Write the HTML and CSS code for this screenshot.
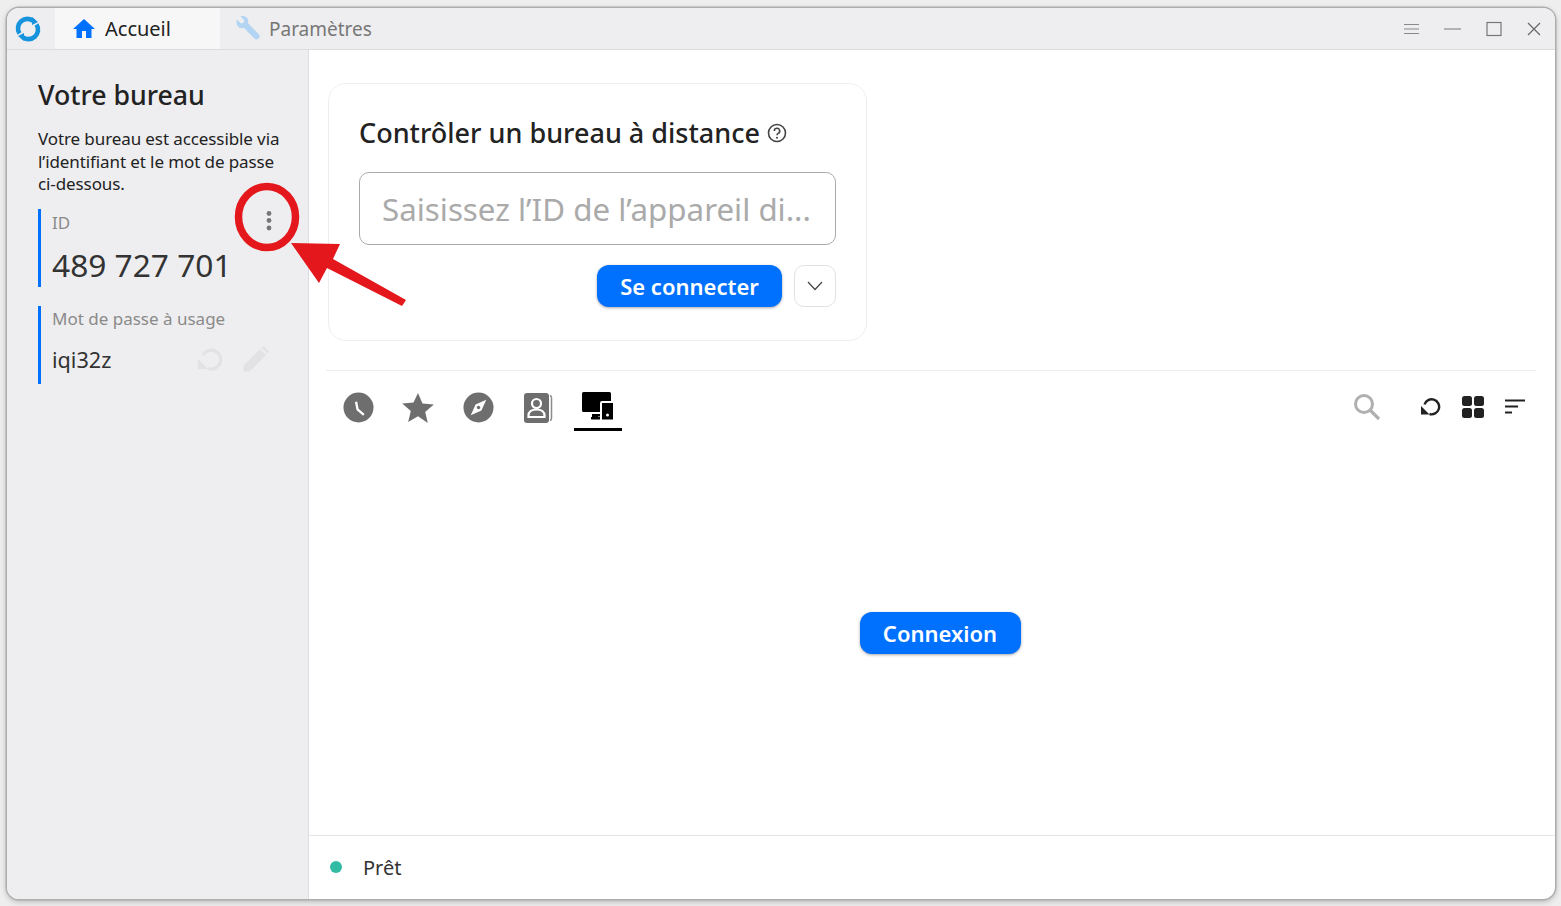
FILE: index.html
```html
<!DOCTYPE html>
<html lang="fr">
<head>
    <meta charset="UTF-8">
    <title>RustDesk - Accueil</title>
    <link rel="stylesheet" href="styles.css">
</head>
<body>
    <div class="window">
        <!-- Barre de titre -->
        <div class="titlebar">
            <svg class="logo" width="26" height="26" viewBox="0 0 26 26">
                <path d="M4.500 17.500A9.500 9.500 0 0 1 18.500 5" fill="none" stroke="#1693dd" stroke-width="4.600"/>
                <path d="M21.500 8.500A9.500 9.500 0 0 1 7.500 21" fill="none" stroke="#1693dd" stroke-width="4.600"/>
                <path d="M17 1l6 5-6 3zM9 25l-6-5 6-3z" fill="#1693dd"/>
            </svg>
            <div class="tab tab-active">
                <svg width="24" height="24" viewBox="0 0 24 24"><path d="M10 21v-7h4v7h5.500v-9H23L12 2 1 12h3.500v9z" fill="#0071ff"/></svg>
                <span>Accueil</span>
            </div>
            <div class="tab">
                <svg width="28" height="28" viewBox="0 0 28 28"><path d="M3 4.500l4 4 2.500-.8.800-2.500-4-4c3.500-1 7 .5 7.800 3.500.3 1.200.2 2.300-.2 3.300L25 19.500c1 1 1 2.500 0 3.500l-.8.800c-1 1-2.500 1-3.500 0L9.800 12.800c-1.200.4-2.500.5-3.800.1C3 12 1.800 8 3 4.500z" fill="#b3d4f2"/></svg>
                <span>Paramètres</span>
            </div>
            <div class="win-buttons">
                <svg width="15" height="12" viewBox="0 0 15 12"><path d="M0 1.500h15M0 6h15M0 10.500h15" stroke="#8a8a8a" stroke-width="1"/></svg>
                <svg width="17" height="12" viewBox="0 0 17 12"><path d="M0 6h17" stroke="#777" stroke-width="1.200"/></svg>
                <svg width="16" height="16" viewBox="0 0 16 16"><rect x="1" y="1.500" width="14" height="13" fill="none" stroke="#777" stroke-width="1.200"/></svg>
                <svg width="14" height="14" viewBox="0 0 14 14"><path d="M1 1l12 12M13 1L1 13" stroke="#666" stroke-width="1.200"/></svg>
            </div>
        </div>

        <div class="content">
            <!-- Panneau gauche -->
            <aside class="sidebar">
                <h2>Votre bureau</h2>
                <p class="intro">Votre bureau est accessible via l’identifiant et le mot de passe ci-dessous.</p>
                <div class="field field-id">
                    <div class="field-head">
                        <span class="label">ID</span>
                        <svg class="dots" width="6" height="22" viewBox="0 0 6 22"><circle cx="3" cy="3.500" r="2.400"/><circle cx="3" cy="10.500" r="2.400"/><circle cx="3" cy="18" r="2.400"/></svg>
                    </div>
                    <div class="id-value">489 727 701</div>
                </div>
                <div class="field field-pass">
                    <span class="label">Mot de passe à usage</span>
                    <div class="pass-row">
                        <span class="pass-value">iqi32z</span>
                        <svg width="26" height="26" viewBox="0 0 26 26"><path d="M5 9A9.500 9.500 0 1 1 10 22.500" fill="none" stroke="#e2e2e4" stroke-width="3.200"/><path d="M0 13l10 10H0z" fill="#e2e2e4"/></svg>
                        <svg class="pencil" width="28" height="28" viewBox="0 0 28 28"><path d="M1.500 26.500v-6L18 4l6 6L7.500 26.500zM19.500 2.500l2-1.500 5.500 5.500-1.500 2z" fill="#e2e2e4"/></svg>
                    </div>
                </div>
            </aside>

            <main class="main">
                <div class="connect-card">
                    <h3>Contrôler un bureau à distance
                        <svg width="20" height="20" viewBox="0 0 20 20"><circle cx="10" cy="10" r="8.500" fill="none" stroke="#444" stroke-width="1.600"/><path d="M7.300 8a2.700 2.700 0 1 1 3.900 2.400c-.8.400-1.200.9-1.200 1.800" fill="none" stroke="#444" stroke-width="1.600"/><circle cx="10" cy="14.700" r="1" fill="#444"/></svg>
                    </h3>
                    <div class="id-input">Saisissez l’ID de l’appareil di...</div>
                    <div class="connect-actions">
                        <button class="btn">Se connecter</button>
                        <button class="btn-more"><svg width="16" height="10" viewBox="0 0 16 10"><path d="M1 1l7 7.500L15 1" fill="none" stroke="#444" stroke-width="1.200"/></svg></button>
                    </div>
                </div>

                <div class="peers">
                    <div class="peer-tabs">
                        <!-- horloge -->
                        <span class="peer-tab"><svg width="31" height="31" viewBox="0 0 32 32"><circle cx="16" cy="16" r="15.500" fill="#6e6e6e"/><path d="M13.500 10l1.500 8 6.500 5.500" fill="none" stroke="#fff" stroke-width="2.400"/></svg></span>
                        <!-- favoris -->
                        <span class="peer-tab"><svg width="32" height="32" viewBox="0 0 32 32"><path d="M16 1l4.500 10.500 11.300 1-8.600 7.400 2.600 11.100L16 24.200 6.200 30l2.600-11.100L.2 11.500l11.300-1z" fill="#6e6e6e"/></svg></span>
                        <!-- boussole -->
                        <span class="peer-tab"><svg width="31" height="31" viewBox="0 0 32 32"><circle cx="16" cy="16" r="15.500" fill="#6e6e6e"/><path d="M24 8l-5 11-11 5 5-11z" fill="#fff"/><circle cx="16" cy="16" r="1.800" fill="#6e6e6e"/></svg></span>
                        <!-- carnet -->
                        <span class="peer-tab"><svg width="30" height="32" viewBox="0 0 30 32"><rect x="1" y="1" width="25" height="30" rx="3" fill="#6e6e6e"/><path d="M27 3.500c1 .3 1.500 1 1.500 2v21c0 1-.5 1.700-1.500 2" fill="none" stroke="#8c8c8c" stroke-width="1.500"/><circle cx="13.500" cy="11.500" r="4.500" fill="none" stroke="#fff" stroke-width="2.200"/><path d="M5.500 25v-1.500c0-3.500 3-6 8-6s8 2.500 8 6V25z" fill="none" stroke="#fff" stroke-width="2.200"/></svg></span>
                        <!-- appareils -->
                        <span class="peer-tab peer-tab-active"><svg width="32" height="28" viewBox="0 0 32 28"><path d="M1.500 0h26a1.500 1.500 0 0 1 1.500 1.500V9h-9a2 2 0 0 0-2 2v9H1.500A1.500 1.500 0 0 1 0 18.500v-17A1.500 1.500 0 0 1 1.500 0zM10 22h8v2.500h-2v.5h2v2.500H9V25h1z" fill="#000"/><path d="M20 11h11v16.500H20zM25.500 21.500a1.500 1.500 0 1 0 0 3 1.500 1.500 0 0 0 0-3z" fill="#000" fill-rule="evenodd"/></svg></span>
                    </div>
                    <div class="peer-tools">
                        <svg class="search" width="28" height="28" viewBox="0 0 28 28"><circle cx="11" cy="11" r="8.500" fill="none" stroke="#b0b0b0" stroke-width="3"/><path d="M17 17l9 9" stroke="#b0b0b0" stroke-width="3.200"/></svg>
                        <svg class="refresh" width="20" height="20" viewBox="0 0 20 20"><path d="M3.500 7.500A7.500 7.500 0 1 1 8.500 17" fill="none" stroke="#222" stroke-width="2.400"/><path d="M0 9l8.500 8.500H0z" fill="#222"/></svg>
                        <svg class="grid" width="22" height="22" viewBox="0 0 22 22"><rect width="10" height="10" rx="2.500" fill="#222"/><rect x="12" width="10" height="10" rx="2.500" fill="#222"/><rect y="12" width="10" height="10" rx="2.500" fill="#222"/><rect x="12" y="12" width="10" height="10" rx="2.500" fill="#222"/></svg>
                        <svg width="20" height="16" viewBox="0 0 20 16"><path d="M0 1.500h20M0 7.500h13M0 13.500h7" stroke="#222" stroke-width="2"/></svg>
                    </div>
                </div>

                <div class="empty">
                    <button class="btn btn-small">Connexion</button>
                </div>

                <div class="status">
                    <span class="status-dot"></span>
                    <span>Prêt</span>
                </div>
            </main>
        </div>
    </div>

    <!-- Annotation rouge -->
    <svg class="annotation" width="190" height="145" viewBox="0 0 190 145">
        <ellipse cx="50" cy="52" rx="28.500" ry="30.500" fill="none" stroke="#e4181c" stroke-width="7.500"/>
        <path d="M74 78l49 1-7 15 73 41-4 6-75-38-8 15z" fill="#e4181c"/>
    </svg>
</body>
</html>
```

FILE: styles.css
```css
* {
    box-sizing: border-box;
}
body {
    margin: 0;
    height: 906px;
    padding: 8px 6px 7px 7px;
    background-color: #eeeeee;
    font-family: "Noto Sans", "Open Sans", sans-serif;
    color: #222;
    overflow: hidden;
    position: relative;
}
.window {
    display: flex;
    flex-direction: column;
    height: 100%;
    background-color: #fff;
    border-radius: 12px;
    overflow: hidden;
    box-shadow: 0 0 0 1.500px #aeaeae, 0 2px 6px rgba(0, 0, 0, 0.3);
}
.titlebar {
    display: flex;
    align-items: center;
    height: 42px;
    flex-shrink: 0;
    background-color: #eeeef0;
    border-bottom: 1px solid #dcdcde;
}
.logo {
    margin-left: 8px;
    margin-right: 14px;
}
.tab {
    display: flex;
    align-items: center;
    gap: 7px;
    height: 41px;
    padding: 0 14px;
    font-size: 19px;
    color: #777;
}
.tab-active {
    width: 165px;
    padding-left: 17px;
    gap: 9px;
    background-color: #f7f7f8;
    font-size: 20px;
    color: #222;
}
.win-buttons {
    display: flex;
    align-items: center;
    gap: 25px;
    margin-left: auto;
    padding-right: 14px;
}
.content {
    display: flex;
    flex: 1;
    min-height: 0;
}
.sidebar {
    width: 302px;
    flex-shrink: 0;
    padding: 24px 20px 0 31px;
    background-color: #eeeef0;
    border-right: 1px solid #dcdcde;
}
.sidebar h2 {
    margin: 0;
    font-size: 26.700px;
    font-weight: 500;
    line-height: 42px;
}
.intro {
    margin: 12px 0 0;
    font-size: 17px;
    line-height: 22.500px;
    letter-spacing: -0.1px;
}
.field {
    border-left: 3px solid #0071ff;
    padding-left: 11px;
}
.field-id {
    margin-top: 13px;
    height: 78px;
}
.field-pass {
    margin-top: 19px;
    height: 78px;
    padding-top: 1px;
}
.field-head {
    display: flex;
    justify-content: space-between;
    align-items: center;
    height: 27px;
    padding-right: 16px;
}
.label {
    font-size: 17px;
    color: #8a8a8a;
}
.dots {
    fill: #777;
    margin-top: -3px;
}
.id-value {
    margin-top: 8px;
    font-size: 31.700px;
    line-height: 42px;
    color: #333;
}
.pass-row {
    display: flex;
    align-items: center;
    margin-top: 15px;
}
.pass-value {
    font-size: 21.600px;
    color: #333;
    width: 146px;
}
.pencil {
    margin-left: 18px;
}
.main {
    flex: 1;
    display: flex;
    flex-direction: column;
    min-width: 0;
}
.connect-card {
    width: 539px;
    height: 258px;
    margin: 33px 0 0 19px;
    padding: 30px 30px 0;
    background-color: #fff;
    border: 1px solid #eeeeee;
    border-radius: 18px;
}
.connect-card h3 {
    display: flex;
    align-items: center;
    gap: 7px;
    margin: 0;
    font-size: 27px;
    font-weight: 500;
    line-height: 38px;
}
.id-input {
    height: 73px;
    margin-top: 20px;
    padding-left: 22px;
    border: 1.500px solid #aaaaaa;
    border-radius: 10px;
    font-size: 31.300px;
    line-height: 73px;
    color: #aaa;
}
.connect-actions {
    display: flex;
    justify-content: flex-end;
    align-items: center;
    gap: 12px;
    margin-top: 20px;
}
.btn {
    width: 185px;
    height: 42px;
    border: none;
    border-radius: 12px;
    background-color: #0071ff;
    color: #fff;
    font-family: inherit;
    font-size: 22px;
    font-weight: 600;
    box-shadow: 0 1px 3px rgba(0, 0, 0, 0.35);
}
.btn-small {
    width: 161px;
}
.btn-more {
    display: flex;
    align-items: center;
    justify-content: center;
    width: 42px;
    height: 42px;
    padding: 0;
    background-color: #fff;
    border: 1.500px solid #e2e2e2;
    border-radius: 10px;
}
.peers {
    display: flex;
    justify-content: space-between;
    align-items: flex-start;
    height: 78px;
    margin: 29px 19px 0 17px;
    padding: 21px 0 0 2px;
    border-top: 1.500px solid #eeeeee;
}
.peer-tabs {
    display: flex;
}
.peer-tab {
    display: flex;
    justify-content: center;
    width: 60px;
    height: 39px;
}
.peer-tab-active {
    position: relative;
}
.peer-tab-active::after {
    content: "";
    position: absolute;
    left: 6px;
    right: 6px;
    bottom: 0;
    height: 3px;
    background-color: #000;
}
.peer-tools {
    display: flex;
    align-items: center;
    height: 30px;
    padding-right: 11px;
}
.peer-tools .search {
    margin-right: 40px;
}
.peer-tools .refresh {
    margin-right: 21px;
}
.peer-tools .grid {
    margin-right: 21px;
}
.empty {
    flex: 1;
    display: flex;
    justify-content: center;
    align-items: center;
    padding: 0 0 18px 16px;
}
.status {
    display: flex;
    align-items: center;
    gap: 21px;
    height: 64px;
    flex-shrink: 0;
    padding-left: 21px;
    padding-bottom: 1px;
    border-top: 1px solid #e4e4e4;
    font-size: 20px;
    color: #333;
}
.status-dot {
    width: 12px;
    height: 12px;
    border-radius: 50%;
    background-color: #32bba5;
}
.annotation {
    position: absolute;
    left: 217px;
    top: 165px;
}
```
